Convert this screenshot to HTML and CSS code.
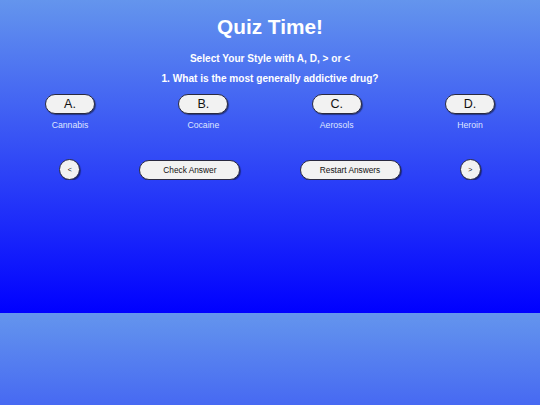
FILE: index.html
```html
<!DOCTYPE html>
<html>
<head>
<meta charset="utf-8">
<link rel="stylesheet" href="styles.css">
</head>
<body>
<div class="page">
  <h1 class="title">Quiz Time!</h1>
  <p class="hint">Select Your Style with A, D, &gt; or &lt;</p>
  <p class="question">1. What is the most generally addictive drug?</p>
  <div class="answers">
    <div class="answer"><button class="pill">A.</button><span class="label">Cannabis</span></div>
    <div class="answer"><button class="pill">B.</button><span class="label">Cocaine</span></div>
    <div class="answer"><button class="pill">C.</button><span class="label">Aerosols</span></div>
    <div class="answer"><button class="pill">D.</button><span class="label">Heroin</span></div>
  </div>
  <div class="controls">
    <button class="round">&lt;</button>
    <button class="wide">Check Answer</button>
    <button class="wide">Restart Answers</button>
    <button class="round">&gt;</button>
  </div>
</div>
</body>
</html>
```
FILE: styles.css
```css
html {
  background: linear-gradient(#6495ed, #0000ff) 0 0 / 100% 313px repeat;
  min-height: 100%;
}
body {
  margin: 0;
  font-family: "Liberation Sans", Arial, sans-serif;
  color: #ffffff;
}
.page {
  display: flex;
  flex-direction: column;
  align-items: stretch;
}
.title {
  margin: 16px 0 0;
  font-size: 20.8px;
  line-height: 21px;
  font-weight: bold;
  text-align: center;
}
.hint {
  margin: 16px 0 0;
  font-size: 10.1px;
  line-height: 12px;
  font-weight: bold;
  text-align: center;
}
.question {
  margin: 8px 0 0;
  font-size: 10.1px;
  line-height: 12px;
  font-weight: bold;
  text-align: center;
}
.answers {
  display: grid;
  grid-template-columns: repeat(4, 1fr);
  padding: 0 3.33px;
  margin-top: 9px;
}
.answer {
  display: flex;
  flex-direction: column;
  align-items: center;
}
button {
  font-family: "Liberation Sans", Arial, sans-serif;
  color: #111;
  background: #f2f2f2;
  border: 1px solid #2a2a40;
  box-shadow: 1px 1px 1px rgba(0, 0, 0, 0.45);
  padding: 0;
  cursor: pointer;
}
.pill {
  width: 50px;
  height: 20px;
  border-radius: 10px;
  font-size: 12.5px;
  line-height: 18px;
}
.label {
  margin-top: 6px;
  font-size: 8.7px;
  line-height: 10px;
  color: #dfe5ff;
}
.controls {
  display: flex;
  justify-content: space-evenly;
  align-items: center;
  margin-top: 29px;
}
.round {
  width: 21px;
  height: 21px;
  border-radius: 50%;
  font-size: 7px;
  line-height: 19px;
}
.wide {
  width: 101px;
  height: 20px;
  border-radius: 10px;
  font-size: 8.3px;
  line-height: 18px;
}
```
